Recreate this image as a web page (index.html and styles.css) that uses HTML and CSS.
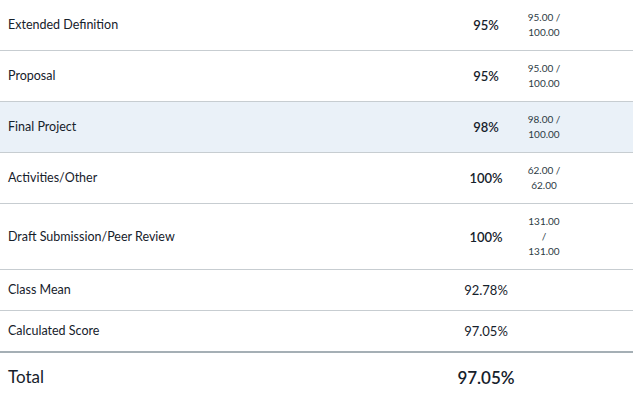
FILE: index.html
```html
<!DOCTYPE html>
<html>
<head>
<meta charset="utf-8">
<link rel="stylesheet" href="styles.css">
</head>
<body>
<div class="grades">
  <div class="row">
    <div class="name">Extended Definition</div>
    <div class="score">95%</div>
    <div class="possible">95.00 / 100.00</div>
  </div>
  <div class="row">
    <div class="name">Proposal</div>
    <div class="score">95%</div>
    <div class="possible">95.00 / 100.00</div>
  </div>
  <div class="row row-active">
    <div class="name">Final Project</div>
    <div class="score">98%</div>
    <div class="possible">98.00 / 100.00</div>
  </div>
  <div class="row">
    <div class="name">Activities/Other</div>
    <div class="score">100%</div>
    <div class="possible">62.00 / 62.00</div>
  </div>
  <div class="row">
    <div class="name">Draft Submission/Peer Review</div>
    <div class="score">100%</div>
    <div class="possible">131.00 / 131.00</div>
  </div>
  <div class="row row-stat">
    <div class="name">Class Mean</div>
    <div class="score stat">92.78%</div>
    <div class="possible"></div>
  </div>
  <div class="row row-stat row-last">
    <div class="name">Calculated Score</div>
    <div class="score stat">97.05%</div>
    <div class="possible"></div>
  </div>
  <div class="row row-total">
    <div class="name">Total</div>
    <div class="score">97.05%</div>
    <div class="possible"></div>
  </div>
</div>
</body>
</html>
```
FILE: styles.css
```css
html, body {
  margin: 0;
  padding: 0;
  background: #ffffff;
}
body {
  font-family: "Lato", "Noto Sans", sans-serif;
  color: #2d3b45;
}
.grades {
  width: 633px;
}
.row {
  display: grid;
  grid-template-columns: 445px 82px 34px 1fr;
  align-items: center;
  border-bottom: 1px solid #c7cdd1;
  padding: 10px 0;
}
.row-active {
  background: #eaf1f8;
}
.name {
  padding-left: 8px;
  font-size: 12.5px;
  line-height: 20px;
  color: #16212b;
}
.score {
  text-align: center;
  font-size: 13px;
  font-weight: 600;
  color: #16212b;
}
.stat {
  font-size: 13px;
  font-weight: 400;
}
.possible {
  text-align: center;
  font-size: 10px;
  line-height: 15px;
  color: #2d3b45;
}
.row-last {
  border-bottom: 2px solid #a5afb5;
}
.row-total {
  border-bottom: none;
  padding: 12px 0;
}
.row-total .name {
  font-size: 17px;
  line-height: 24px;
}
.row-total .score {
  font-size: 17px;
  font-weight: 600;
}
```
